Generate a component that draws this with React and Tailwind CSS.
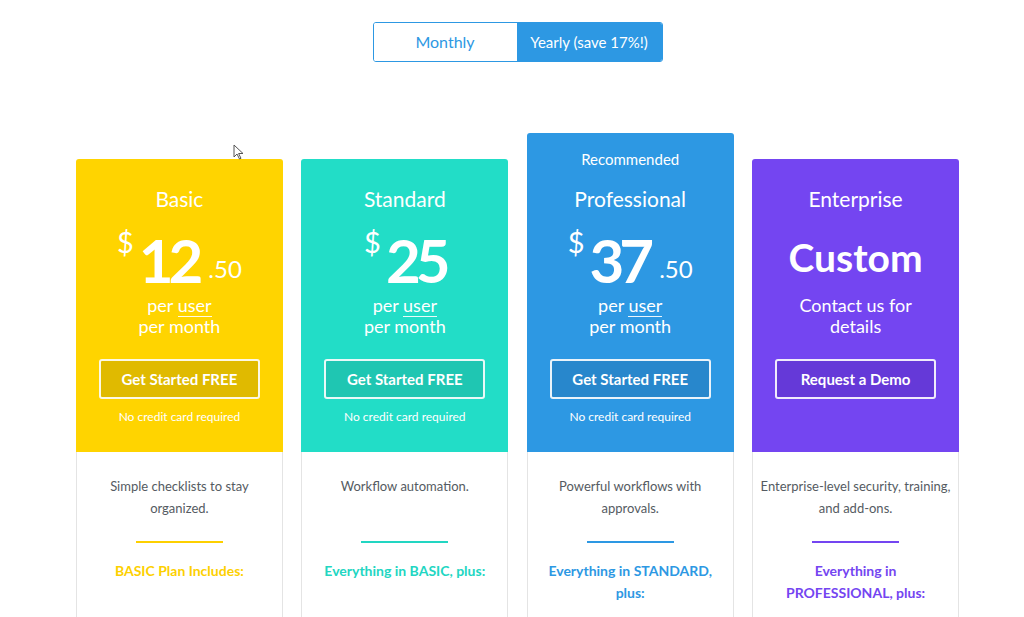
const plans = [
  {
    name: "Basic",
    dollars: "12",
    cents: ".50",
    bg: "bg-[#ffd400]",
    btn: "bg-[#e0ba00]",
    text: "text-[#fdd000]",
    line: "bg-[#fdd000]",
    desc: "Simple checklists to stay organized.",
    head: "BASIC Plan Includes:",
    cta: "Get Started FREE",
  },
  {
    name: "Standard",
    dollars: "25",
    cents: "",
    bg: "bg-[#22ddc7]",
    btn: "bg-[#1fc6b2]",
    text: "text-[#22d6c2]",
    line: "bg-[#22d6c2]",
    desc: "Workflow automation.",
    head: "Everything in BASIC, plus:",
    cta: "Get Started FREE",
  },
  {
    name: "Professional",
    dollars: "37",
    cents: ".50",
    bg: "bg-[#2d98e3]",
    btn: "bg-[#2887cc]",
    text: "text-[#2d98e3]",
    line: "bg-[#2d98e3]",
    desc: "Powerful workflows with approvals.",
    head: "Everything in STANDARD, plus:",
    cta: "Get Started FREE",
    recommended: true,
  },
  {
    name: "Enterprise",
    custom: true,
    bg: "bg-[#7445f1]",
    btn: "bg-[#6539d8]",
    text: "text-[#7445f1]",
    line: "bg-[#7445f1]",
    desc: "Enterprise-level security, training, and add-ons.",
    head: "Everything in PROFESSIONAL, plus:",
    cta: "Request a Demo",
  },
];

function PlanCard({ plan }) {
  return (
    <div className={`flex w-[207px] flex-col ${plan.recommended ? "" : "mt-[26px]"}`}>
      <div
        className={`${plan.bg} flex flex-col items-center rounded-t-[3px] text-white ${
          plan.recommended ? "h-[319px] pt-[16px]" : "h-[293px] pt-[26px]"
        }`}
      >
        {plan.recommended && (
          <div className="mb-[16px] h-[20px] text-[15px] leading-[20px]">Recommended</div>
        )}
        <div className="h-[28px] text-[21px] leading-[28px]">{plan.name}</div>
        <div className="mt-[12px] flex h-[64px] items-start justify-center">
          {plan.custom ? (
            <div className="flex h-[64px] items-center text-[39px] font-bold leading-none">Custom</div>
          ) : (
            <>
              <span className="mr-[5px] mt-[2px] text-[29px] leading-[30px]">$</span>
              <span className="mt-[3px] text-[60px] font-bold leading-[64px] tracking-[-5px]">{plan.dollars}</span>
              {plan.cents && (
                <span className="ml-[10px] mt-[32px] text-[24px] leading-[24px]">{plan.cents}</span>
              )}
            </>
          )}
        </div>
        <div className="mt-[6px] text-center text-[18px] leading-[21px]">
          {plan.custom ? (
            <>
              <div>Contact us for</div>
              <div>details</div>
            </>
          ) : (
            <>
              <div>
                per <span className="border-b-[1.5px] border-white/90">user</span>
              </div>
              <div>per month</div>
            </>
          )}
        </div>
        <button
          className={`${plan.btn} mt-[22px] h-[40px] w-[161px] rounded-[3px] border-2 border-white/90 text-[15px] font-bold text-white`}
        >
          {plan.cta}
        </button>
        {!plan.custom && <div className="mt-[9px] text-[12px] leading-[18px]">No credit card required</div>}
      </div>
      <div className="flex h-[300px] flex-col items-center border border-t-0 border-[#e4e4e4] bg-white px-[5px] pt-[23px] text-center">
        <div className="h-[44px] text-[13px] leading-[22px] text-[#555b62]">{plan.desc}</div>
        <div className={`${plan.line} mt-[22px] h-[2px] w-[87px]`} />
        <div className={`${plan.text} mt-[17px] px-[13px] text-[14px] font-bold leading-[22px]`}>{plan.head}</div>
      </div>
    </div>
  );
}

export default function App() {
  return (
    <div
      className="relative h-[617px] w-[1024px] overflow-hidden bg-white"
      style={{ fontFamily: "Lato, 'Open Sans', sans-serif" }}
    >
      <div className="flex justify-center pl-[11px] pt-[22px]">
        <div className="flex h-[40px] overflow-hidden rounded-[3px] border-[1.5px] border-[#2d98e3]">
          <button className="w-[143px] bg-white text-[16px] text-[#2d98e3]">Monthly</button>
          <button className="w-[145px] bg-[#2d98e3] text-[15px] text-white">Yearly (save 17%!)</button>
        </div>
      </div>
      <div className="mt-[71px] flex justify-center gap-[18.4px] pl-[11px]">
        {plans.map((p) => (
          <PlanCard key={p.name} plan={p} />
        ))}
      </div>
      <svg className="absolute left-[233px] top-[144px]" width="11" height="16" viewBox="0 0 11 16">
        <path d="M1 1 L1 13 L4 10 L6.5 15 L8 14.3 L5.6 9.5 L10 9.5 Z" fill="white" stroke="#555" strokeWidth="1" />
      </svg>
    </div>
  );
}
